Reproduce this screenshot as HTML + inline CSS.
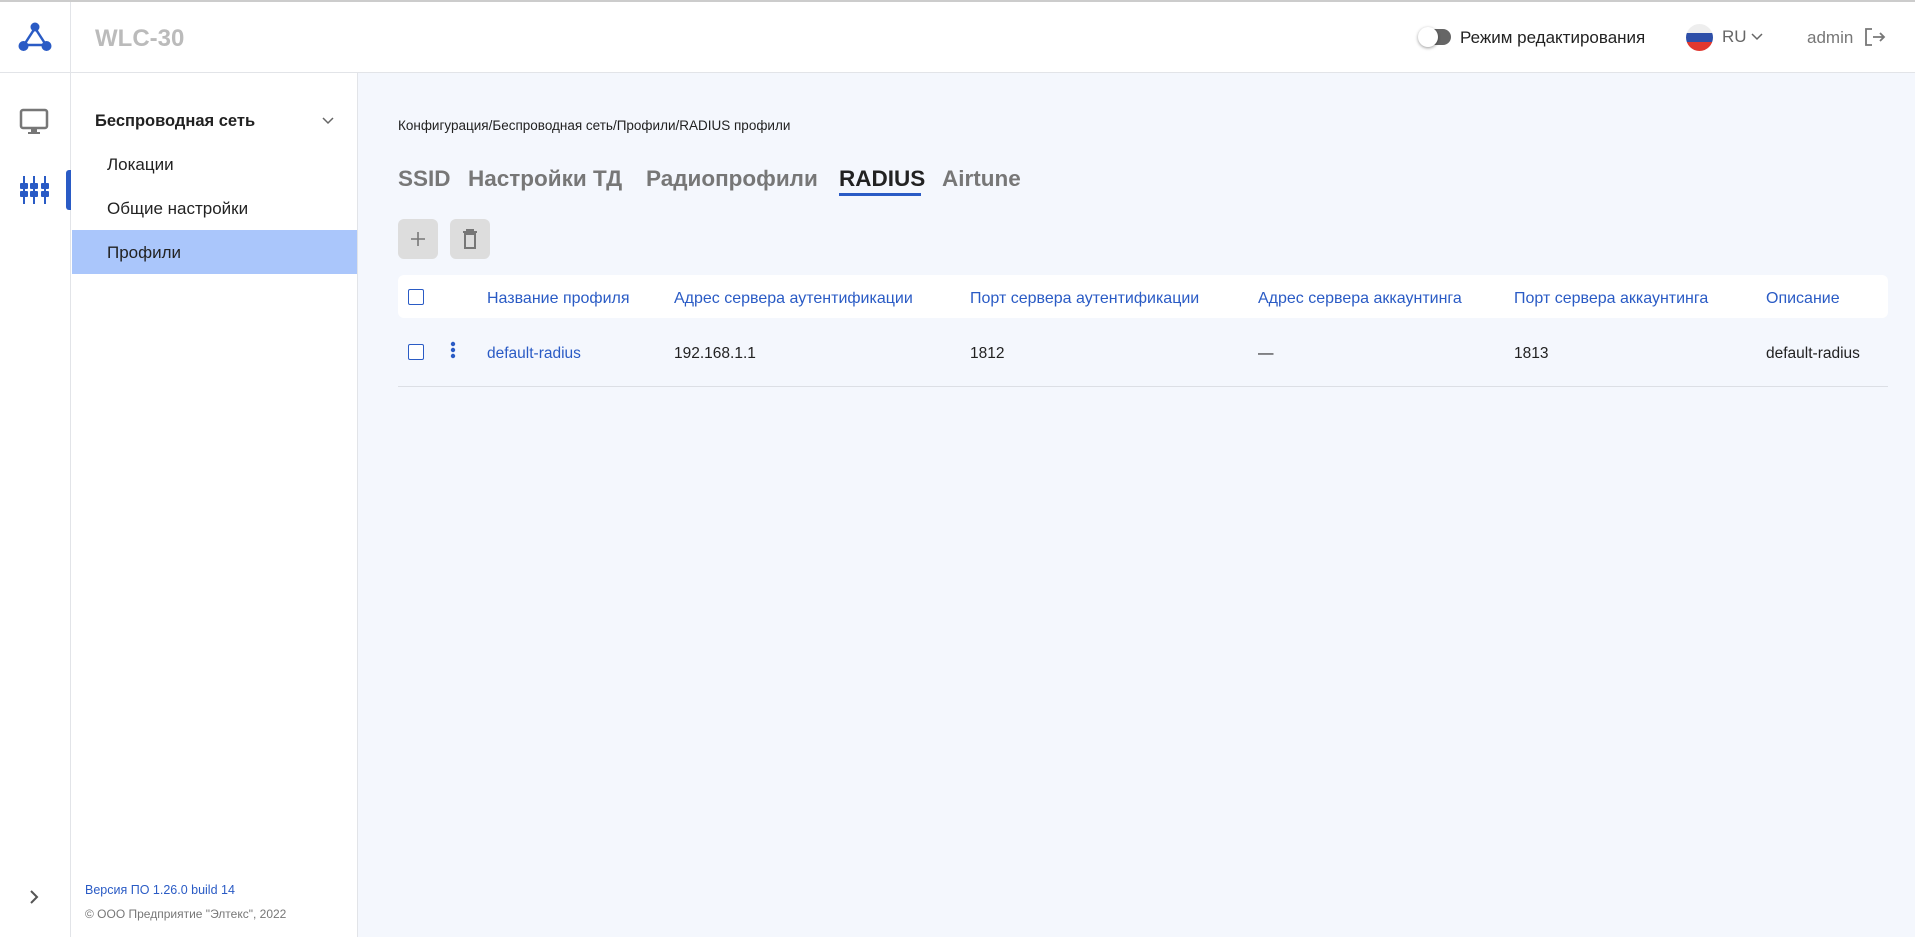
<!DOCTYPE html>
<html><head><meta charset="utf-8"><style>
*{box-sizing:border-box;margin:0;padding:0}
body{width:1915px;height:937px;overflow:hidden;background:#f4f7fd;font-family:"Liberation Sans",sans-serif;color:#222;position:relative}
.a{position:absolute;white-space:nowrap}
.hdr{left:0;top:0;width:1915px;height:73px;background:#fff;border-top:2px solid #ccc;border-bottom:1px solid #e2e4e8}
.rail{left:0;top:73px;width:71px;height:864px;background:#fff;border-right:1px solid #e2e4e8}
.side{left:71px;top:73px;width:287px;height:864px;background:#fff;border-right:1px solid #e2e4e8}
.cb{width:16px;height:16px;border:1.5px solid #2a5bc5;border-radius:2px;background:#fff}
.th{top:290px;font-size:16px;color:#2a5bc5}
.td{top:345px;font-size:15.5px;color:#222}
.td.blue,.blue{color:#2a5bc5}
.tab{top:166px;font-size:22.5px;font-weight:bold;color:#777}
</style></head><body>
<div class="a hdr"></div>
<div class="a" style="left:70px;top:2px;width:1px;height:71px;background:#e2e4e8"></div>
<svg class="a" style="left:18px;top:22px" width="34" height="30" viewBox="0 0 34 30"><line x1="17" y1="6" x2="6" y2="23" stroke="#2a5bc5" stroke-width="2.5"/><line x1="17" y1="6" x2="28" y2="23" stroke="#2a5bc5" stroke-width="2.5"/><line x1="6" y1="23" x2="28" y2="23" stroke="#2a5bc5" stroke-width="2.5"/><circle cx="17" cy="5" r="4.5" fill="#2a5bc5"/><circle cx="5.5" cy="24" r="5" fill="#2a5bc5"/><circle cx="28.5" cy="24" r="5" fill="#2a5bc5"/></svg>
<div class="a" style="left:95px;top:25px;font-size:24px;font-weight:bold;color:#bbb">WLC-30</div>
<div class="a" style="left:1419px;top:29px;width:32px;height:16px;border-radius:8px;background:#666"></div>
<div class="a" style="left:1418px;top:27px;width:20px;height:20px;border-radius:50%;background:#fff;box-shadow:0 1px 3px rgba(0,0,0,.4)"></div>
<div class="a" style="left:1460px;top:28px;font-size:17px;color:#222">Режим редактирования</div>
<div class="a" style="left:1686px;top:24px;width:27px;height:27px;border-radius:50%;overflow:hidden;background:linear-gradient(#eee 0 33%,#2e4fa8 33% 66%,#e0382f 66%)"></div>
<div class="a" style="left:1722px;top:27px;font-size:17px;color:#666">RU</div>
<svg class="a" style="left:1751px;top:33px" width="12" height="8"><path d="M1 1l5 5 5-5" stroke="#666" stroke-width="1.5" fill="none"/></svg>
<div class="a" style="left:1807px;top:28px;font-size:17px;color:#777">admin</div>
<svg class="a" style="left:1864px;top:27px" width="22" height="20"><path d="M8 2H2v16h6M9 10h11M16 6l4 4-4 4" stroke="#777" stroke-width="1.8" fill="none"/></svg>

<div class="a rail"></div>
<svg class="a" style="left:19px;top:108px" width="30" height="28"><rect x="2" y="2" width="26" height="18" rx="2" stroke="#777" stroke-width="2.5" fill="none"/><rect x="12" y="21" width="6" height="4" fill="#777"/><rect x="9" y="24" width="12" height="2" fill="#777"/></svg>
<svg class="a" style="left:19px;top:174px" width="32" height="32" viewBox="0 0 32 32" fill="#2a5bc5"><g><rect x="4" y="2" width="2" height="28"/><rect x="14" y="2" width="2" height="28"/><rect x="25" y="2" width="2" height="28"/><rect x="1" y="9" width="8" height="6" rx="1"/><rect x="11" y="9" width="8" height="6" rx="1"/><rect x="22" y="9" width="8" height="6" rx="1"/><rect x="1" y="17" width="8" height="6" rx="1"/><rect x="11" y="17" width="8" height="6" rx="1"/><rect x="22" y="17" width="8" height="6" rx="1"/></g></svg>
<div class="a" style="left:66px;top:170px;width:5px;height:40px;border-radius:3px 0 0 3px;background:#2a5bc5"></div>
<svg class="a" style="left:29px;top:889px" width="10" height="16"><path d="M2 2l6 6-6 6" stroke="#555" stroke-width="2" fill="none"/></svg>

<div class="a side"></div>
<div class="a" style="left:95px;top:112px;font-size:16.5px;font-weight:bold">Беспроводная сеть</div>
<svg class="a" style="left:322px;top:117px" width="12" height="8"><path d="M1 1l5 5 5-5" stroke="#666" stroke-width="1.5" fill="none"/></svg>
<div class="a" style="left:107px;top:155px;font-size:17px">Локации</div>
<div class="a" style="left:107px;top:199px;font-size:17px">Общие настройки</div>
<div class="a" style="left:72px;top:230px;width:285px;height:44px;background:#aac6fb"></div>
<div class="a" style="left:107px;top:243px;font-size:17px">Профили</div>
<div class="a blue" style="left:85px;top:883px;font-size:12.5px">Версия ПО 1.26.0 build 14</div>
<div class="a" style="left:85px;top:907px;font-size:12px;color:#777">© ООО Предприятие "Элтекс", 2022</div>

<div class="a" style="left:398px;top:118px;font-size:13.5px">Конфигурация/Беспроводная сеть/Профили/RADIUS профили</div>
<div class="a tab" style="left:398px">SSID</div>
<div class="a tab" style="left:468px">Настройки ТД</div>
<div class="a tab" style="left:646px">Радиопрофили</div>
<div class="a tab" style="left:839px;color:#222">RADIUS</div>
<div class="a" style="left:839px;top:193px;width:82px;height:3px;background:#2a5bc5"></div>
<div class="a tab" style="left:942px">Airtune</div>

<div class="a" style="left:398px;top:219px;width:40px;height:40px;border-radius:6px;background:#ddd"></div>
<svg class="a" style="left:410px;top:231px" width="16" height="16"><path d="M8 1v14M1 8h14" stroke="#777" stroke-width="1.6"/></svg>
<div class="a" style="left:450px;top:219px;width:40px;height:40px;border-radius:6px;background:#ddd"></div>
<svg class="a" style="left:462px;top:229px" width="16" height="20"><path d="M1 3h14M5 3V1h6v2M3 5h10v14H3z" stroke="#777" stroke-width="2" fill="none"/></svg>

<div class="a" style="left:398px;top:275px;width:1490px;height:43px;background:#fff;border-radius:6px"></div>
<div class="a cb" style="left:408px;top:289px"></div>
<div class="a th" style="left:487px">Название профиля</div>
<div class="a th" style="left:674px">Адрес сервера аутентификации</div>
<div class="a th" style="left:970px">Порт сервера аутентификации</div>
<div class="a th" style="left:1258px">Адрес сервера аккаунтинга</div>
<div class="a th" style="left:1514px">Порт сервера аккаунтинга</div>
<div class="a th" style="left:1766px">Описание</div>

<div class="a cb" style="left:408px;top:344px"></div>
<svg class="a" style="left:450px;top:341px" width="6" height="20" fill="#2a5bc5"><circle cx="3" cy="3" r="2.2"/><circle cx="3" cy="9" r="2.2"/><circle cx="3" cy="15" r="2.2"/></svg>
<div class="a td blue" style="left:487px">default-radius</div>
<div class="a td" style="left:674px">192.168.1.1</div>
<div class="a td" style="left:970px">1812</div>
<div class="a td" style="left:1258px">—</div>
<div class="a td" style="left:1514px">1813</div>
<div class="a td" style="left:1766px">default-radius</div>
<div class="a" style="left:398px;top:386px;width:1490px;height:1px;background:#dcdfe5"></div>
</body></html>
